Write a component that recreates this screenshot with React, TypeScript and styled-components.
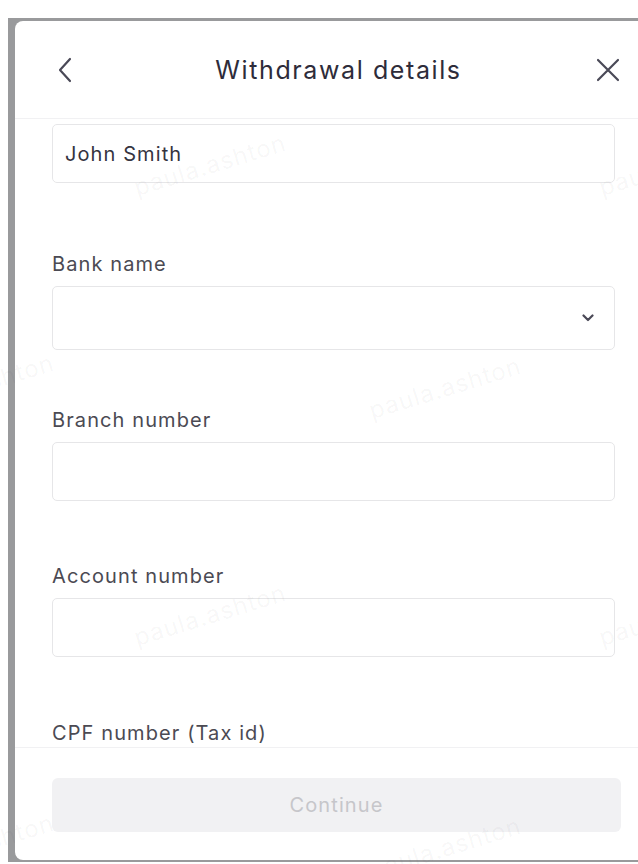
import { useLayoutEffect, useRef } from "react";
import styled, { createGlobalStyle } from "styled-components";

const Global = createGlobalStyle`
  html, body {
    margin: 0;
    padding: 0;
    height: 100%;
    overflow: hidden;
    background: #fff;
    font-family: Inter, "Noto Sans", "Liberation Sans", sans-serif;
  }
  * { box-sizing: border-box; }
`;

const Page = styled.div`
  position: relative;
  width: 638px;
  height: 864px;
  overflow: hidden;
  padding: 18px 0 2px 8px;
`;

const Backdrop = styled.div`
  height: 844px;
  background: #999a9c;
  padding: 3px 0 2px 7px;
  overflow: hidden;
`;

const Modal = styled.div`
  width: 643px;
  height: 839px;
  background: #fff;
  border-radius: 8px;
  display: flex;
  flex-direction: column;
  overflow: hidden;
`;

const Header = styled.div`
  height: 98px;
  flex: none;
  display: grid;
  grid-template-columns: 60px 1fr 60px;
  align-items: center;
  padding: 0 38px 0 42px;
  border-bottom: 1px solid #f1f1f3;
`;

const Title = styled.h1`
  margin: 0;
  text-align: center;
  font-size: 25px;
  font-weight: 400;
  letter-spacing: 1.6px;
  color: #2e2c3a;
`;

const IconButton = styled.button<{ $end?: boolean }>`
  border: none;
  background: none;
  padding: 0;
  display: flex;
  justify-content: ${(p) => (p.$end ? "flex-end" : "flex-start")};
  color: #4a4957;
  cursor: pointer;
`;

const Body = styled.div`
  flex: 1;
  overflow: hidden;
  padding: 24px 43px 0 37px;
`;

const Field = styled.div<{ $after: number }>`
  display: flex;
  flex-direction: column;
  gap: 10px;
  margin-bottom: ${(p) => p.$after}px;
`;

const Label = styled.label`
  height: 24px;
  line-height: 24px;
  font-size: 20px;
  letter-spacing: 1.1px;
  color: #4b4a53;
`;

const Control = styled.div<{ $tall?: boolean }>`
  height: ${(p) => (p.$tall ? 64 : 59)}px;
  border: 1.5px solid #e6e6e8;
  border-radius: 5px;
  display: flex;
  align-items: center;
  justify-content: space-between;
  padding: 0 20px 0 12px;
  font-size: 20px;
  letter-spacing: 1.1px;
  color: #35343f;
`;

const Footer = styled.div`
  flex: none;
  border-top: 1px solid #f1f1f3;
  padding: 30px 37px 28px 37px;
`;

const Continue = styled.button`
  width: 100%;
  height: 54px;
  border: none;
  border-radius: 6px;
  background: #f1f1f3;
  color: #c6c6ca;
  font-family: inherit;
  font-size: 20px;
  letter-spacing: 1.1px;
`;

const Watermarks = styled.div`
  position: absolute;
  inset: 0;
  pointer-events: none;
`;

const Mark = styled.span`
  position: absolute;
  font-size: 24px;
  letter-spacing: 1px;
  color: rgba(40, 40, 60, 0.045);
  transform: translate(-50%, -50%) rotate(-17deg);
  white-space: nowrap;
`;

const fields = [
  { label: "Full name", value: "John Smith", after: 69 },
  { label: "Bank name", select: true, after: 58 },
  { label: "Branch number", after: 63 },
  { label: "Account number", after: 64 },
  { label: "CPF number (Tax id)", after: 63 },
];

const marks = [
  [210, 165], [675, 165],
  [-22, 385], [445, 388],
  [210, 615], [675, 615],
  [-22, 845], [445, 848],
];

export default function App() {
  const body = useRef<HTMLDivElement>(null);
  useLayoutEffect(() => {
    if (body.current) body.current.scrollTop = 53;
  }, []);
  return (
    <Page>
      <Global />
      <Backdrop>
        <Modal>
          <Header>
            <IconButton aria-label="Back">
              <svg width="16" height="26" viewBox="0 0 16 26" fill="none">
                <path d="M13 2 L3 13 L13 24" stroke="currentColor" strokeWidth="2.2" strokeLinecap="round" strokeLinejoin="round" />
              </svg>
            </IconButton>
            <Title>Withdrawal details</Title>
            <IconButton $end aria-label="Close">
              <svg width="24" height="24" viewBox="0 0 24 24" fill="none">
                <path d="M2 2 L22 22 M22 2 L2 22" stroke="currentColor" strokeWidth="2.2" strokeLinecap="round" />
              </svg>
            </IconButton>
          </Header>
          <Body ref={body}>
            {fields.map((f) => (
              <Field key={f.label} $after={f.after}>
                <Label>{f.label}</Label>
                <Control $tall={f.select}>
                  <span>{f.value}</span>
                  {f.select && (
                    <svg width="12" height="8" viewBox="0 0 12 8" fill="none">
                      <path d="M1.5 1.5 L6 6 L10.5 1.5" stroke="#4a4957" strokeWidth="2.2" strokeLinecap="round" strokeLinejoin="round" />
                    </svg>
                  )}
                </Control>
              </Field>
            ))}
          </Body>
          <Footer>
            <Continue disabled>Continue</Continue>
          </Footer>
        </Modal>
      </Backdrop>
      <Watermarks>
        {marks.map(([x, y], i) => (
          <Mark key={i} style={{ left: x, top: y }}>paula.ashton</Mark>
        ))}
      </Watermarks>
    </Page>
  );
}
